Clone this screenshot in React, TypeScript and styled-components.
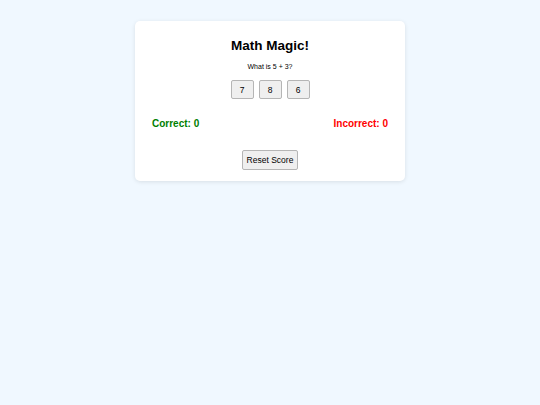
import { useState } from "react";
import styled, { createGlobalStyle } from "styled-components";

const GlobalStyle = createGlobalStyle`
  html, body {
    margin: 0;
    padding: 0;
    background: #f0f8ff;
    font-family: "Liberation Sans", Arial, sans-serif;
  }
`;

const Page = styled.div`
  display: flex;
  justify-content: center;
  align-items: flex-start;
  padding-top: 21px;
  min-height: 405px;
  box-sizing: border-box;
`;

const Card = styled.div`
  width: 270px;
  box-sizing: border-box;
  background: #ffffff;
  border-radius: 5px;
  box-shadow: 0 1px 4px rgba(0, 0, 0, 0.1);
  padding: 17px 15px 11px;
  display: flex;
  flex-direction: column;
  align-items: center;
`;

const Title = styled.h1`
  margin: 0;
  font-size: 13.5px;
  line-height: 16px;
  font-weight: bold;
  color: #000;
`;

const Question = styled.p`
  margin: 9px 0 0;
  font-size: 7px;
  line-height: 8px;
  color: #000;
`;

const Options = styled.div`
  display: flex;
  gap: 5px;
  margin-top: 9px;
`;

const Button = styled.button<{ $w: number; $h: number }>`
  width: ${(p) => p.$w}px;
  height: ${(p) => p.$h}px;
  padding: 0;
  font-family: "Liberation Sans", Arial, sans-serif;
  font-size: 8.5px;
  color: #000;
  background: #efefef;
  border: 1px solid #b5b5b5;
  border-radius: 2px;
  cursor: pointer;
`;

const Scores = styled.div`
  align-self: stretch;
  display: flex;
  justify-content: space-between;
  padding: 0 2px;
  margin-top: 19px;
`;

const Score = styled.span<{ $color: string }>`
  font-size: 10px;
  line-height: 12px;
  font-weight: bold;
  color: ${(p) => p.$color};
`;

const ResetRow = styled.div`
  margin-top: 20px;
  display: flex;
`;

export default function App() {
  const [correct, setCorrect] = useState(0);
  const [incorrect, setIncorrect] = useState(0);
  const answer = 8;

  const pick = (n: number) => {
    if (n === answer) setCorrect(correct + 1);
    else setIncorrect(incorrect + 1);
  };

  return (
    <>
      <GlobalStyle />
      <Page>
        <Card>
          <Title>Math Magic!</Title>
          <Question>What is 5 + 3?</Question>
          <Options>
            {[7, 8, 6].map((n) => (
              <Button key={n} $w={23} $h={19} onClick={() => pick(n)}>
                {n}
              </Button>
            ))}
          </Options>
          <Scores>
            <Score $color="#008000">Correct: {correct}</Score>
            <Score $color="#ff0000">Incorrect: {incorrect}</Score>
          </Scores>
          <ResetRow>
            <Button
              $w={56}
              $h={20}
              onClick={() => {
                setCorrect(0);
                setIncorrect(0);
              }}
            >
              Reset Score
            </Button>
          </ResetRow>
        </Card>
      </Page>
    </>
  );
}
